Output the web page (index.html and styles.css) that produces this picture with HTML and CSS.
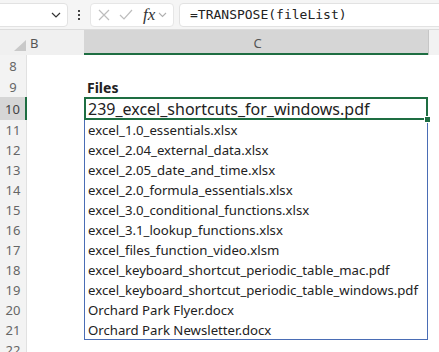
FILE: index.html
```html
<!DOCTYPE html>
<html lang="en">
<head>
  <meta charset="UTF-8">
  <meta name="viewport" content="width=device-width, initial-scale=1">
  <title>fileList</title>
  <link rel="stylesheet" href="styles.css">
</head>
<body>

  <div class="toolbar">
    <div class="namebox">
      <svg width="10" height="6" viewBox="0 0 10 6"><path d="M1 1l4 4 4-4" fill="none" stroke="#333" stroke-width="1.2"/></svg>
    </div>
    <div class="dots"><span></span><span></span><span></span></div>
    <div class="fxbox">
      <svg class="ico" width="12" height="12" viewBox="0 0 12 12"><path d="M1 1l10 10M11 1L1 11" fill="none" stroke="#bdbdbd" stroke-width="1.2"/></svg>
      <svg class="ico" width="14" height="11" viewBox="0 0 14 11"><path d="M1 6l4 4 8-9" fill="none" stroke="#bdbdbd" stroke-width="1.2"/></svg>
      <span class="fx">fx</span>
      <svg class="chev" width="9" height="6" viewBox="0 0 9 6"><path d="M1 1l3.5 3.5L8 1" fill="none" stroke="#b0b0b0" stroke-width="1.1"/></svg>
    </div>
    <div class="formula">=TRANSPOSE(fileList)</div>
  </div>

  <div class="sheet">
    <div class="row head">
      <div class="rn corner"><span class="tri"></span></div>
      <div class="b">B</div>
      <div class="c sel">C</div>
      <div class="d"></div>
    </div>

    <div class="row r8"><div class="rn">8</div><div class="b"></div><div class="c"></div><div class="d"></div></div>
    <div class="row r9"><div class="rn">9</div><div class="b"></div><div class="c title">Files</div><div class="d"></div></div>
    <div class="row r10"><div class="rn active">10</div><div class="b"></div><div class="c active">239_excel_shortcuts_for_windows.pdf<span class="handle"></span></div><div class="d"></div></div>
    <div class="row"><div class="rn">11</div><div class="b"></div><div class="c spill">excel_1.0_essentials.xlsx</div><div class="d"></div></div>
    <div class="row"><div class="rn">12</div><div class="b"></div><div class="c spill">excel_2.04_external_data.xlsx</div><div class="d"></div></div>
    <div class="row"><div class="rn">13</div><div class="b"></div><div class="c spill">excel_2.05_date_and_time.xlsx</div><div class="d"></div></div>
    <div class="row"><div class="rn">14</div><div class="b"></div><div class="c spill">excel_2.0_formula_essentials.xlsx</div><div class="d"></div></div>
    <div class="row"><div class="rn">15</div><div class="b"></div><div class="c spill">excel_3.0_conditional_functions.xlsx</div><div class="d"></div></div>
    <div class="row"><div class="rn">16</div><div class="b"></div><div class="c spill">excel_3.1_lookup_functions.xlsx</div><div class="d"></div></div>
    <div class="row"><div class="rn">17</div><div class="b"></div><div class="c spill">excel_files_function_video.xlsm</div><div class="d"></div></div>
    <div class="row"><div class="rn">18</div><div class="b"></div><div class="c spill">excel_keyboard_shortcut_periodic_table_mac.pdf</div><div class="d"></div></div>
    <div class="row"><div class="rn">19</div><div class="b"></div><div class="c spill">excel_keyboard_shortcut_periodic_table_windows.pdf</div><div class="d"></div></div>
    <div class="row"><div class="rn">20</div><div class="b"></div><div class="c spill">Orchard Park Flyer.docx</div><div class="d"></div></div>
    <div class="row"><div class="rn">21</div><div class="b"></div><div class="c spill last">Orchard Park Newsletter.docx</div><div class="d"></div></div>
    <div class="row"><div class="rn">22</div><div class="b"></div><div class="c"></div><div class="d"></div></div>
  </div>

</body>
</html>
```

FILE: styles.css
```css
* {
  box-sizing: border-box;
}

body {
  margin: 0;
  width: 439px;
  height: 352px;
  overflow: hidden;
  font-family: "Noto Sans", sans-serif;
  color: #222;
  background: #fff;
}

/* formula bar */
.toolbar {
  display: flex;
  align-items: center;
  height: 30px;
  background: #f5f5f5;
  border-bottom: 1px solid #dcdcdc;
  white-space: nowrap;
}

.namebox {
  width: 75px;
  height: 24px;
  margin-left: -7px;
  background: #fff;
  border: 1px solid #e2e2e2;
  border-radius: 4px;
  display: flex;
  align-items: center;
  justify-content: flex-end;
  padding-right: 6px;
}

.dots {
  width: 22px;
  display: flex;
  flex-direction: column;
  align-items: center;
  gap: 2px;
}

.dots span {
  width: 2px;
  height: 2px;
  background: #444;
}

.fxbox {
  width: 84px;
  height: 24px;
  background: #fff;
  border: 1px solid #e6e6e6;
  border-radius: 4px;
  display: flex;
  align-items: center;
  padding-left: 7px;
}

.fxbox .ico {
  margin-right: 9px;
}

.fx {
  font-family: "Liberation Serif", serif;
  font-style: italic;
  font-size: 17px;
  color: #333;
  margin-left: 1px;
  margin-right: 3px;
}

.formula {
  flex: 1;
  height: 24px;
  margin-left: 5px;
  margin-right: -10px;
  background: #fff;
  border: 1px solid #e2e2e2;
  border-radius: 4px;
  padding-left: 10px;
  font-family: "DejaVu Sans Mono", monospace;
  font-size: 13px;
  line-height: 22px;
  color: #222;
}

/* grid */
.row {
  display: flex;
  height: 20px;
}

.rn {
  width: 27px;
  background: #f3f3f3;
  color: #666;
  font-size: 13px;
  display: flex;
  align-items: center;
  justify-content: center;
  border-right: 1px solid #e1e1e1;
}

.b {
  width: 57px;
}

.c {
  width: 344px;
  display: flex;
  align-items: center;
  padding-left: 3px;
  font-size: 13.2px;
  white-space: nowrap;
}

.d {
  flex: 1;
}

.head {
  height: 25px;
  background: #f0f0f0;
  color: #555;
  font-size: 13px;
}

.head .rn {
  border-right: none;
  align-items: flex-end;
  justify-content: flex-end;
  padding: 0 1px 4px 0;
  background: #f0f0f0;
}

.tri {
  width: 0;
  height: 0;
  border-left: 12px solid transparent;
  border-bottom: 11px solid #c9c9c9;
}

.head .b {
  display: flex;
  align-items: center;
  padding-left: 3px;
}

.head .c.sel {
  justify-content: center;
  background: #d6d6d6;
  color: #555;
  border-bottom: 2px solid #1e6e42;
  padding-top: 2px;
  font-size: 13px;
}

.head .d {
  border-left: 1px solid #c6c6c6;
  background: #f2f2f2;
}

.r8 {
  height: 22px;
}

.r10 {
  height: 23px;
}

.title {
  font-weight: bold;
  font-size: 14px;
}

.rn.active {
  background: #d6d6d6;
  color: #444;
  border-right: 2px solid #1e6e42;
}

.c.active {
  position: relative;
  border: 2px solid #1e6e42;
  padding-left: 2px;
  font-size: 16px;
}

.handle {
  position: absolute;
  right: -5px;
  bottom: -5px;
  width: 7px;
  height: 7px;
  background: #1e6e42;
  border: 1px solid #fff;
}

.c.spill {
  border-left: 1px solid #4a6db5;
  border-right: 1px solid #4a6db5;
}

.c.last {
  border-bottom: 1px solid #4a6db5;
}
```
